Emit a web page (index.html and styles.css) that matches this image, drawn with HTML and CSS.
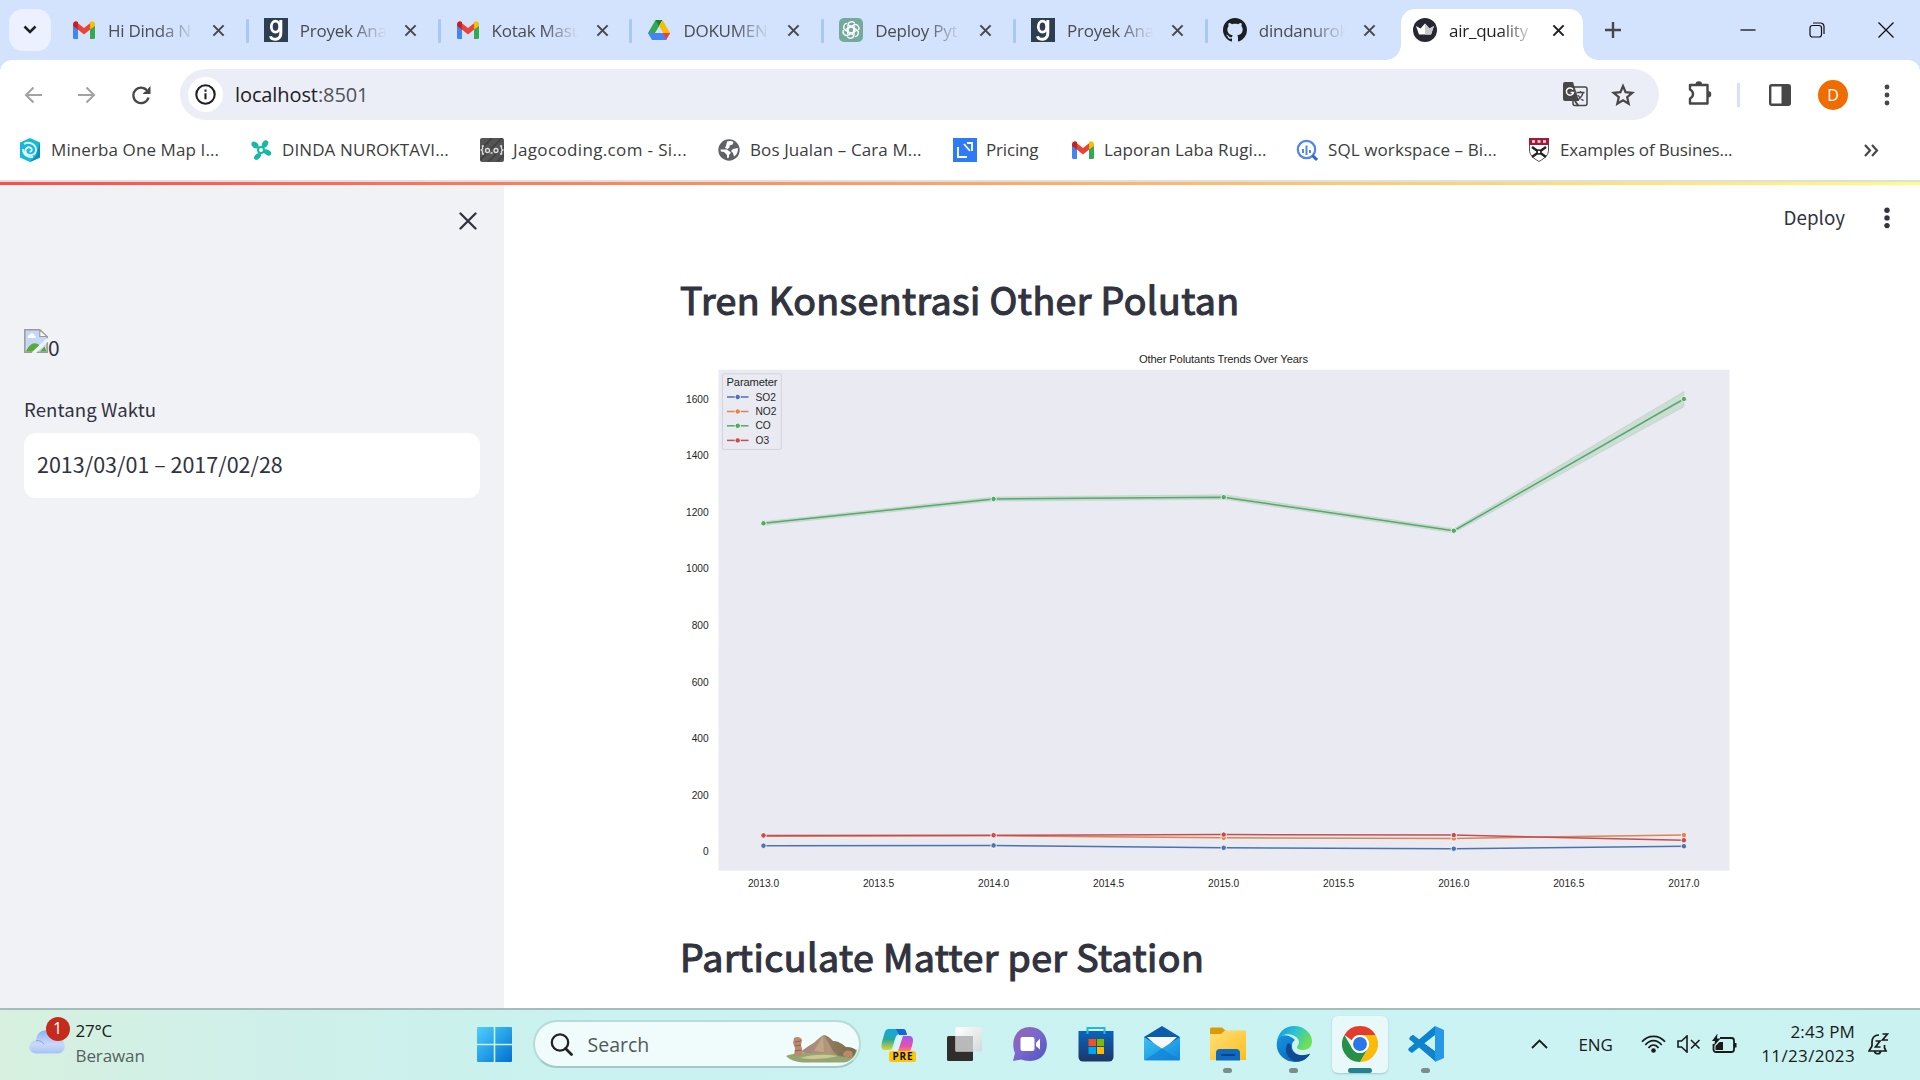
FILE: index.html
```html
<!DOCTYPE html>
<html lang="id">
<head>
<meta charset="utf-8">
<title>air_quality</title>
<link rel="stylesheet" href="styles.css">
</head>
<body>
<svg class="defs" width="0" height="0">
  <defs>
    <symbol id="gmail" viewBox="0 0 24 24">
      <path fill="#4285f4" d="M1 6v13.500a1.500 1.500 0 0 0 1.500 1.500H6V10z"/>
      <path fill="#34a853" d="M23 6v13.500a1.500 1.500 0 0 1-1.500 1.500H18V10z"/>
      <path fill="#ea4335" d="M5 4.500 12 10l7-5.500 1 5.500-8 6.500L4 10z"/>
      <path fill="#c5221f" d="M1 6.500C1 3.500 4 2.500 6 4v7.500L1 8z"/>
      <path fill="#fbbc04" d="M23 6.500C23 3.500 20 2.500 18 4v7.500L23 8z"/>
    </symbol>
    <symbol id="nine" viewBox="0 0 24 24">
      <path fill="#2d3e50" d="M0 0h24v24H0z"/>
      <ellipse cx="11.500" cy="8.700" rx="4.200" ry="5.500" fill="none" stroke="#fff" stroke-width="2.800"/>
      <path fill="none" stroke="#fff" stroke-width="3" d="M16.800 2v13c0 8-9.500 7.500-10.300 3.200"/>
    </symbol>
    <symbol id="cross" viewBox="0 0 14 14"><path d="m1.500 1.500 11 11m0-11-11 11" stroke="currentColor" stroke-width="2.200" fill="none"/></symbol>
    <linearGradient id="gWin" x1="0" y1="0" x2="1" y2="1"><stop offset="0" stop-color="#4dd0ff"/><stop offset="1" stop-color="#0070d0"/></linearGradient>
    <linearGradient id="gCloud" x1="0" y1="0" x2="0" y2="1"><stop offset="0" stop-color="#8fb0f2"/><stop offset=".6" stop-color="#c9daf8"/><stop offset="1" stop-color="#a9c2f5"/></linearGradient>
    <linearGradient id="gCopA" x1="0" y1="0" x2="0" y2="1"><stop offset="0" stop-color="#12a5ef"/><stop offset=".5" stop-color="#28a9a0"/><stop offset="1" stop-color="#e6d32a"/></linearGradient>
    <linearGradient id="gCopB" x1="0" y1="0" x2="0" y2="1"><stop offset="0" stop-color="#a355f2"/><stop offset=".6" stop-color="#e753a6"/><stop offset="1" stop-color="#ff9062"/></linearGradient>
    <linearGradient id="gChat" x1="0" y1="0" x2="1" y2="1"><stop offset="0" stop-color="#9a65a9"/><stop offset=".45" stop-color="#7b68cf"/><stop offset="1" stop-color="#4f55c0"/></linearGradient>
    <linearGradient id="gStore" x1="0" y1="0" x2="0" y2="1"><stop offset="0" stop-color="#0a64be"/><stop offset="1" stop-color="#1e3765"/></linearGradient>
    <linearGradient id="gMail" x1="0" y1="0" x2="1" y2="1"><stop offset="0" stop-color="#39c2f5"/><stop offset="1" stop-color="#1286db"/></linearGradient>
    <linearGradient id="gFolder" x1="0" y1="0" x2="1" y2="1"><stop offset="0" stop-color="#ffe07a"/><stop offset="1" stop-color="#ffbd1c"/></linearGradient>
    <linearGradient id="gEdge" x1="0" y1="0" x2="1" y2=".5"><stop offset="0" stop-color="#0f8fe0"/><stop offset=".5" stop-color="#2cc3d2"/><stop offset="1" stop-color="#6ee053"/></linearGradient>
    <linearGradient id="gEdge2" x1="0" y1="0" x2="1" y2="1"><stop offset="0" stop-color="#1496e5"/><stop offset="1" stop-color="#0b57ad"/></linearGradient>
    <linearGradient id="gHill" x1="0" y1="0" x2="1" y2="0"><stop offset="0" stop-color="#a5827d"/><stop offset=".5" stop-color="#b3977a"/><stop offset="1" stop-color="#6c7048"/></linearGradient>
    <linearGradient id="gPlate" x1="0" y1="0" x2="1" y2="1"><stop offset="0" stop-color="#fff"/><stop offset="1" stop-color="#d5d9da"/></linearGradient>
  </defs>
</svg>

<header class="tabstrip">
  <button class="tab-search"><svg width="14" height="10" viewBox="0 0 14 10"><path d="m1.500 1.500 5.500 5.500 5.500-5.500" fill="none" stroke="#202124" stroke-width="2.500"/></svg></button>
  <nav class="tabs">
    <div class="tab"><svg class="fav"><use href="#gmail"/></svg><span class="title">Hi Dinda N</span><svg class="close"><use href="#cross"/></svg></div>
    <div class="tab"><svg class="fav"><use href="#nine"/></svg><span class="title">Proyek Ana</span><svg class="close"><use href="#cross"/></svg></div>
    <div class="tab"><svg class="fav"><use href="#gmail"/></svg><span class="title">Kotak Masu</span><svg class="close"><use href="#cross"/></svg></div>
    <div class="tab"><svg class="fav" viewBox="0 0 24 24"><path fill="#34a853" d="M8.500 2h3.700L12 9 5 20 1 15z"/><path fill="#188038" d="M8.500 2h7L12 8z"/><path fill="#fbbc04" d="M15.500 2 23 15h-7L12 8z"/><path fill="#4285f4" d="M1 15h22l-4 7H5z"/><path fill="#ea4335" d="M16 15h7l-4 7z"/><path fill="#d3e2fd" d="m12 8.500 4 6.500H8z"/></svg><span class="title">DOKUMEN</span><svg class="close"><use href="#cross"/></svg></div>
    <div class="tab"><svg class="fav" viewBox="0 0 24 24"><rect width="24" height="24" rx="5" fill="#74aa9c"/><g fill="none" stroke="#fff" stroke-width="1.300"><path id="petal" d="M9 14V7.500c0-4 5-5 6.800-2M9 14l3 1.600 5.500-3.100"/><use href="#petal" transform="rotate(60 12 12)"/><use href="#petal" transform="rotate(120 12 12)"/><use href="#petal" transform="rotate(180 12 12)"/><use href="#petal" transform="rotate(240 12 12)"/><use href="#petal" transform="rotate(300 12 12)"/></g></svg><span class="title">Deploy Pyt</span><svg class="close"><use href="#cross"/></svg></div>
    <div class="tab"><svg class="fav"><use href="#nine"/></svg><span class="title">Proyek Ana</span><svg class="close"><use href="#cross"/></svg></div>
    <div class="tab last"><svg class="fav" viewBox="0 0 16 16"><path fill="#1b1f24" d="M8 0C3.580 0 0 3.580 0 8c0 3.540 2.290 6.530 5.470 7.590.4.070.55-.17.55-.38 0-.19-.01-.82-.01-1.490-2.010.37-2.530-.49-2.690-.94-.09-.23-.48-.94-.82-1.130-.28-.15-.68-.52-.01-.53.63-.01 1.080.58 1.230.82.72 1.210 1.870.87 2.330.66.07-.52.28-.87.51-1.070-1.780-.2-3.640-.89-3.640-3.950 0-.87.31-1.590.82-2.150-.08-.2-.36-1.020.08-2.120 0 0 .67-.21 2.200.82.64-.18 1.320-.27 2-.27s1.360.09 2 .27c1.530-1.040 2.200-.82 2.200-.82.44 1.100.16 1.920.08 2.120.51.56.82 1.270.82 2.150 0 3.070-1.870 3.750-3.650 3.950.29.25.54.73.54 1.480 0 1.070-.01 1.930-.01 2.200 0 .21.15.46.55.38A8.010 8.010 0 0 0 16 8c0-4.420-3.580-8-8-8"/></svg><span class="title">dindanurok</span><svg class="close"><use href="#cross"/></svg></div>
    <div class="tab active"><svg class="fav" viewBox="0 0 24 24"><circle cx="12" cy="12" r="12" fill="#262730"/><path fill="#fff" d="m3 8 4.500 2.500L12 5.500l4.500 5L21 8l-3 8.500H6z"/><path fill="#c9c9cc" d="M12 5.500V16.500h6L21 8l-4.500 2.500z"/></svg><span class="title">air_quality</span><svg class="close"><use href="#cross"/></svg></div>
  </nav>
  <svg class="newtab" width="16" height="16" viewBox="0 0 16 16"><path d="M8 0v16M0 8h16" stroke="#474747" stroke-width="2.400"/></svg>
  <div class="window-buttons">
    <svg width="16" height="16"><path d="M.5 8h15" stroke="#111" stroke-width="1.300"/></svg>
    <svg width="16" height="16" viewBox="0 0 16 16" fill="none" stroke="#111" stroke-width="1.200"><rect x="1" y="3.500" width="11.500" height="11.500" rx="2.500"/><path d="M4 1h7.500A3.500 3.500 0 0 1 15 4.500V12"/></svg>
    <svg width="16" height="16"><path d="m.5.5 15 15m0-15-15 15" stroke="#111" stroke-width="1.300"/></svg>
  </div>
</header>

<section class="toolbar">
  <div class="address-row">
    <svg class="nav back" width="18" height="18" viewBox="0 0 18 18"><path d="M18 9H2M9.500 1.500 2 9l7.500 7.500" fill="none" stroke="#a3a3a5" stroke-width="2.100"/></svg>
    <svg class="nav forward" width="18" height="18" viewBox="0 0 18 18"><path d="M0 9h16M8.500 1.500 16 9l-7.500 7.500" fill="none" stroke="#a3a3a5" stroke-width="2.100"/></svg>
    <svg class="nav reload" width="20" height="20" viewBox="0 0 20 20"><path d="M17 7A7.700 7.700 0 1 0 17.500 12.500" fill="none" stroke="#474747" stroke-width="2.300"/><path d="M19.500 1v8h-8l2.500-2.500h3V3.500z" fill="#474747"/></svg>
    <div class="omnibox">
      <span class="site-info"><svg width="21" height="21" viewBox="0 0 21 21"><circle cx="10.500" cy="10.500" r="9.200" fill="none" stroke="#202124" stroke-width="2.100"/><path d="M10.500 9.200v6M10.500 5.500v2.200" stroke="#202124" stroke-width="2.100"/></svg></span>
      <span class="url">localhost<i>:8501</i></span>
      <svg class="translate" width="25" height="25" viewBox="0 0 25 25"><rect x="10" y="5" width="14" height="18.500" rx="2" fill="#eceef7" stroke="#474747" stroke-width="1.500"/><path d="M2 0h8l6 19H2a2 2 0 0 1-2-2V2a2 2 0 0 1 2-2z" fill="#474747"/><path d="M10 7.500a3.600 3.600 0 1 0 .5 3H7.500" fill="none" stroke="#fff" stroke-width="1.500"/><path d="m12 19 3.500 5" stroke="#474747" stroke-width="2"/><path d="M13.500 10.500h8M17.500 9v2M20 11c-.8 3-3 5.500-5.200 7M14.800 13c1.500 2.500 3.500 4.500 5.700 5.600" fill="none" stroke="#474747" stroke-width="1.300"/></svg>
      <svg class="star" width="24" height="23" viewBox="0 0 24 23"><path d="m12 3 2.600 6.200 6.700.6-5.100 4.400 1.500 6.500-5.700-3.500-5.700 3.500 1.500-6.500-5.100-4.400 6.700-.6z" fill="none" stroke="#474747" stroke-width="2.200"/></svg>
    </div>
    <svg class="puzzle" width="26" height="26" viewBox="0 0 26 26"><path d="M3 5h17.500v18.500H3v-5c4-2 4-7 0-9z" fill="none" stroke="#474747" stroke-width="2.400" stroke-linejoin="round"/><path d="M8.500 4.500a3.300 3.300 0 0 1 6.600 0zM21 11a3.300 3.300 0 0 1 0 6.600z" fill="#474747"/></svg>
    <span class="divider"></span>
    <svg class="panel" width="22" height="22" viewBox="0 0 22 22"><rect x="1.200" y="1.200" width="19.600" height="19.600" rx="1.500" fill="none" stroke="#474747" stroke-width="2.400"/><path fill="#474747" d="M12.500 1H21v20h-8.500z"/></svg>
    <span class="avatar">D</span>
    <svg class="kebab" width="6" height="22" viewBox="0 0 6 22" fill="#474747"><circle cx="3" cy="3" r="2.400"/><circle cx="3" cy="11" r="2.400"/><circle cx="3" cy="19" r="2.400"/></svg>
  </div>
  <div class="bookmarks">
    <a class="wide"><svg class="fav" viewBox="0 0 24 24"><path fill="#18b8d8" d="m12 0 10 4.500v15L12 24 2 19.500v-15z"/><path fill="#0c8fb4" d="m12 24 10-4.500v-15L18 18z"/><path d="M6 6c5-3 12 0 12 6 0 5-7 7-10 3-2-4 2-7 5-5 2 2 0 4-1.500 3.500M5 11c0 6 5 9 10 8" fill="none" stroke="#e2fbff" stroke-width="1.800"/></svg><span>Minerba One Map I...</span></a>
    <a class="wide"><svg class="fav" viewBox="0 0 24 24"><g fill="#16b8a6"><ellipse cx="6" cy="7" rx="4" ry="2.800" transform="rotate(40 6 7)"/><ellipse cx="16" cy="6" rx="4" ry="2.800" transform="rotate(-60 16 6)"/><ellipse cx="18.500" cy="14.500" rx="4" ry="2.600" transform="rotate(30 18.500 14.500)"/><ellipse cx="8.500" cy="18.500" rx="4" ry="2.600" transform="rotate(-45 8.500 18.500)"/></g><circle cx="12" cy="12" r="3" fill="#fff" stroke="#16b8a6" stroke-width="2"/></svg><span>DINDA NUROKTAVI...</span></a>
    <a class="widest"><svg class="fav" viewBox="0 0 24 24"><rect width="24" height="24" rx="2" fill="#555"/><path d="M0 12 12 0M0 22 22 0M8 24 24 8M17 24l7-7" stroke="#444" stroke-width="2"/><path d="M4 8H2.500v3L1 12l1.500 1v3H4M20 8h1.500v3l1.500 1-1.500 1v3H20M10.500 15h2" fill="none" stroke="#ddd" stroke-width="1.300"/><circle cx="7.500" cy="12.500" r="2" fill="none" stroke="#ddd" stroke-width="1.300"/><circle cx="16" cy="12.500" r="2" fill="none" stroke="#ddd" stroke-width="1.300"/></svg><span>Jagocoding.com - Si...</span></a>
    <a class="wide"><svg class="fav" viewBox="0 0 24 24"><circle cx="12" cy="12" r="10.700" fill="#5f6368"/><path fill="#fff" d="M3.500 11.500h6.500l2.500 2c2 .5 1 3-.5 3v2.500c-.5 1.500-2 1.500-2 0V17l-3-3-3-.5zM10 3.500c2-1 5-.5 6.500.5l-1 2.500-3 1v2l-2 1.500-2.500-1 1-2zM16 11l4.800-1c.5 3-.8 7-3.800 8.500l-1-3.500-2-2z"/></svg><span>Bos Jualan – Cara M...</span></a>
    <a><svg class="fav" viewBox="0 0 24 24"><path fill="#2f7bf6" d="M0 0h24v24H0z"/><path d="M5 9v10h9M14 5h5v8M11 6l6 7" fill="none" stroke="#fff" stroke-width="1.800"/></svg><span>Pricing</span></a>
    <a class="wide"><svg class="fav"><use href="#gmail"/></svg><span>Laporan Laba Rugi...</span></a>
    <a class="wide"><svg class="fav" viewBox="0 0 24 24"><circle cx="11.500" cy="11.500" r="8.700" fill="none" stroke="#4f86ec" stroke-width="2.200"/><path d="m17.500 17.500 4.500 4.500" stroke="#2b66d9" stroke-width="3"/><path d="M8 11v4M11.500 7.500V17M15 12v3" stroke="#4f86ec" stroke-width="2"/></svg><span>SQL workspace – Bi...</span></a>
    <a><svg class="fav" viewBox="0 0 24 24"><path fill="#fff" stroke="#555" d="M2.500.5h19V12c0 5-3.500 8-9.500 11.500C6 20 2.500 17 2.500 12z"/><path fill="#9e1b39" d="M2 0h20v7H2z"/><path d="M5 3.500h3M10.500 3.500h3M16 3.500h3" stroke="#f3dce1" stroke-width="2.500"/><path d="m5 9 14 10M19 9 5 19" stroke="#222" stroke-width="2.400"/><circle cx="12" cy="14" r="2" fill="#fff" stroke="#222" stroke-width="1.500"/></svg><span>Examples of Busines...</span></a>
    <svg class="more" width="15" height="13" viewBox="0 0 15 13"><path d="m1 1 5 5.500L1 12M8 1l5 5.500L8 12" fill="none" stroke="#474747" stroke-width="2.200"/></svg>
  </div>
</section>

<div class="decoration"></div>

<div class="app">
  <aside class="sidebar">
    <div class="sidebar-head"><svg width="18" height="18" viewBox="0 0 18 18"><path d="m1.500 1.500 15 15m0-15-15 15" stroke="#31333f" stroke-width="2.300" stroke-linecap="round"/></svg></div>
    <div class="broken">
      <svg width="24" height="24" viewBox="0 0 24 24"><path fill="#c5d7f6" stroke="#9b9b9b" stroke-width="1.500" d="M.8.8h15L23.200 8v15.200H.8z"/><path fill="#fff" stroke="#9b9b9b" stroke-width="1.200" d="M15.800 1v6.500h7.400z"/><path fill="#fff" d="M4 9a2 2 0 0 1 1.500-3c1-2.500 4.500-2 4.700.5C12 6.500 12 9 11 9z"/><path fill="#56ab35" d="M2 22.500c3-7.500 9-11 13.500-6L10 22.500zM16 22.500l4.500-5 2 5z"/><path d="M9 24.500 24.500 10" stroke="#f0f2f6" stroke-width="3.500"/></svg><span>0</span>
    </div>
    <label class="field-label">Rentang Waktu</label>
    <div class="date-input">2013/03/01 – 2017/02/28</div>
  </aside>
  <main class="main">
    <div class="app-bar"><span>Deploy</span><svg width="6" height="22" viewBox="0 0 6 22" fill="#31333f"><circle cx="3" cy="3.200" r="2.700"/><circle cx="3" cy="10.900" r="2.700"/><circle cx="3" cy="18.600" r="2.700"/></svg></div>
    <h2 class="first-heading">Tren Konsentrasi Other Polutan</h2>
    <svg class="chart" width="1060" height="560" viewBox="680 340 1060 560">
      <rect x="718.500" y="369.700" width="1011" height="501" fill="#eaeaf2"/>
      <text class="chart-title" x="1223.500" y="363.400" textLength="169" text-anchor="middle">Other Polutants Trends Over Years</text>
      <g class="ylabels" text-anchor="end">
        <text x="708.700" y="402.600">1600</text><text x="708.700" y="459.200">1400</text><text x="708.700" y="515.700">1200</text><text x="708.700" y="572.300">1000</text><text x="708.700" y="628.900">800</text><text x="708.700" y="685.500">600</text><text x="708.700" y="742">400</text><text x="708.700" y="798.600">200</text><text x="708.700" y="855.200">0</text>
      </g>
      <g class="xlabels" text-anchor="middle">
        <text x="763.500" y="887.300">2013.0</text><text x="878.500" y="887.300">2013.5</text><text x="993.600" y="887.300">2014.0</text><text x="1108.600" y="887.300">2014.5</text><text x="1223.700" y="887.300">2015.0</text><text x="1338.700" y="887.300">2015.5</text><text x="1453.800" y="887.300">2016.0</text><text x="1568.800" y="887.300">2016.5</text><text x="1683.900" y="887.300">2017.0</text>
      </g>
      <path fill="#55a868" fill-opacity=".2" stroke="#55a868" stroke-opacity=".15" d="M763.500 521.500 993.600 497l230.100-2.300 230.100 34 230.100-137.200v15.300l-230.100 126-230.100-33.500-230.100 1.800-230.100 24.200z"/>
      <g class="series blue"><polyline points="763.500,845.700 993.600,845.400 1223.700,847.800 1453.800,848.700 1683.900,846.200"/><circle cx="763.500" cy="845.700" r="2.700"/><circle cx="993.600" cy="845.400" r="2.700"/><circle cx="1223.700" cy="847.800" r="2.700"/><circle cx="1453.800" cy="848.700" r="2.700"/><circle cx="1683.900" cy="846.200" r="2.700"/></g>
      <g class="series orange"><polyline points="763.500,836.300 993.600,835.800 1223.700,837.800 1453.800,838.400 1683.900,835"/><circle cx="763.500" cy="836.300" r="2.700"/><circle cx="993.600" cy="835.800" r="2.700"/><circle cx="1223.700" cy="837.800" r="2.700"/><circle cx="1453.800" cy="838.400" r="2.700"/><circle cx="1683.900" cy="835" r="2.700"/></g>
      <g class="series green"><polyline points="763.500,523.300 993.600,499 1223.700,497.200 1453.800,530.700 1683.900,399"/><circle cx="763.500" cy="523.300" r="2.700"/><circle cx="993.600" cy="499" r="2.700"/><circle cx="1223.700" cy="497.200" r="2.700"/><circle cx="1453.800" cy="530.700" r="2.700"/><circle cx="1683.900" cy="399" r="2.700"/></g>
      <g class="series red"><polyline points="763.500,835.400 993.600,835.200 1223.700,834.600 1453.800,835.100 1683.900,840.200"/><circle cx="763.500" cy="835.400" r="2.700"/><circle cx="993.600" cy="835.200" r="2.700"/><circle cx="1223.700" cy="834.600" r="2.700"/><circle cx="1453.800" cy="835.100" r="2.700"/><circle cx="1683.900" cy="840.200" r="2.700"/></g>
      <rect x="722.500" y="373.800" width="58.800" height="75.600" rx="1.500" fill="#eaeaf2" stroke="#d3d3dc"/>
      <text class="legend-title" x="726.500" y="385.600" textLength="51">Parameter</text>
      <g class="series blue"><path d="M727 397h21.500"/><circle cx="737.700" cy="397" r="2.700"/></g>
      <g class="series orange"><path d="M727 411.500h21.500"/><circle cx="737.700" cy="411.500" r="2.700"/></g>
      <g class="series green"><path d="M727 425.800h21.500"/><circle cx="737.700" cy="425.800" r="2.700"/></g>
      <g class="series red"><path d="M727 440.400h21.500"/><circle cx="737.700" cy="440.400" r="2.700"/></g>
      <g class="legend"><text x="755.500" y="400.600">SO2</text><text x="755.500" y="415.100">NO2</text><text x="755.500" y="429.400">CO</text><text x="755.500" y="443.900">O3</text></g>
    </svg>
    <h2 class="second-heading">Particulate Matter per Station</h2>
  </main>
</div>

<footer class="taskbar">
  <div class="weather">
    <span class="weather-icon"><svg width="36" height="24" viewBox="0 0 36 24"><path fill="url(#gCloud)" d="M7 23.500C-2 23-1.500 10.500 7 10.500 8-2.500 23-3 25.500 8 38 7 39 22.500 29 23.500z"/><path fill="none" stroke="#86a5ee" d="M7 10.500c4-.5 7 1.500 8 4"/></svg><b>1</b></span>
    <div class="weather-text"><p>27°C</p><p class="muted">Berawan</p></div>
  </div>
  <svg class="start" width="35" height="35" viewBox="0 0 35 35" fill="url(#gWin)"><path d="M1 0h15.700v16.700H0V1a1 1 0 0 1 1-1zM18.300 0H34a1 1 0 0 1 1 1v15.700H18.300zM0 18.300h16.700V35H1a1 1 0 0 1-1-1zM18.300 18.300H35V34a1 1 0 0 1-1 1H18.300z"/></svg>
  <div class="search">
    <svg width="23" height="23" viewBox="0 0 23 23"><circle cx="10" cy="9.500" r="8.200" fill="none" stroke="#222" stroke-width="2.300"/><path d="m15.500 15.500 6 6" stroke="#222" stroke-width="2.800" stroke-linecap="round"/></svg>
    <span>Search</span>
    <svg class="landscape" width="71" height="29" viewBox="0 0 71 29"><path fill="#94a672" d="M0 22c4-2 12-3 20-3h48l3-4c0 4-3 9-8 12-2 1-5 1.500-9 1.500H18C8 28 3 25 0 22z"/><path fill="#ccc890" d="M14 24c12-4 26-4 38-2-12 3-26 4-38 2z"/><path fill="url(#gHill)" d="M15 18c3-3 7-6 11-8 5-3 8-8 12-9 4 1 6 3 9 6 5 0 9 3 13 6 4 0 8 1 10 3-1 5-3 7-6 8-10-3-21-5-32-5-8 0-11 1-17-1z"/><path fill="#7d694f" fill-opacity=".6" d="m38 1 8 14c1 3 4 4 6 7 4 1 9 1 14 1l4-7c-3-2-7-3-10-3-4-3-8-6-13-6-3-3-5-5-9-6z"/><path fill="#d3b591" fill-opacity=".55" d="m37 2-9 15 10 1z"/><path fill="#b98c6f" d="M8 4c3-2 7-1 8 2l-1 5 2 7-2 4H8l1-8-2-5z"/><path d="m9 8 6-1M9 12l6-1M9 17l6-1" stroke="#8c6148"/><path fill="#bc8a62" d="M57 21c1-5 5-5 8-4 2 1 2 3 1 6-3 1-7 1-9-2z"/></svg>
  </div>
  <div class="pinned">
    <span class="app-icon"><svg width="36" height="36" viewBox="0 0 36 36"><path fill="url(#gCopA)" d="M9 3h14c3 0 3 3 4 5h-8c-5 0-5 16-9 16H5c-6 0-3-8-1-15 1-4 2-6 5-6z"/><path fill="#1565d8" d="M16 3h7c3 0 3 3 4 6h-8z"/><path fill="url(#gCopB)" d="M22 10h7c6 0 4 7 2 13-1 3-2 4-5 4H13c5-2 5-17 9-17z"/><path fill="#d8f6f5" d="m18 10h5l-5 15h-5z"/><rect x="9" y="25" width="27" height="11" rx="2.500" fill="#fcc40a"/><text class="pre" x="12.500" y="34" textLength="20">PRE</text></svg></span>
    <span class="app-icon"><svg width="36" height="36" viewBox="0 0 36 36"><rect x="1" y="10" width="26" height="25" rx="1.500" fill="#2f2e2d"/><rect x="9.500" y="1" width="26.500" height="24.500" rx="1" fill="url(#gPlate)"/><path fill="#b9b9b9" d="M9.500 10H27v15.500H9.500z"/></svg></span>
    <span class="app-icon"><svg width="36" height="36" viewBox="0 0 36 36"><path fill="url(#gChat)" d="M18 1c22 0 23 34 0 34-4 0-7-1-9-1.500L1 35l2-8C-2 15 4 1 18 1z"/><rect x="8.500" y="11" width="14" height="14" rx="2" fill="#fff"/><path fill="#fff" d="m24 17 4-4.500v11L24 20z"/></svg></span>
    <span class="app-icon"><svg width="36" height="36" viewBox="0 0 36 36"><path fill="url(#gStore)" d="M.5 5h35v26a4.500 4.500 0 0 1-4.500 4.500H5A4.500 4.500 0 0 1 .5 31z"/><path fill="none" stroke="#21b5f3" stroke-width="2" d="M9.500 8V2h17v6"/><path fill="#f25022" d="M10.500 13H18v7h-7.500z"/><path fill="#7fba00" d="M19 13h7v7h-7z"/><path fill="#00a4ef" d="M10.500 21H18v7h-7.500z"/><path fill="#ffb900" d="M19 21h7v7h-7z"/></svg></span>
    <span class="app-icon"><svg width="36" height="36" viewBox="0 0 36 36"><path fill="#0b5cad" d="M0 11 18 0l18 11v11H0z"/><path fill="#f7f7f7" d="M3 11h30L18 25z"/><path fill="url(#gMail)" d="m0 11 18 11.500L36 11v22.500a1 1 0 0 1-1 1H1a1 1 0 0 1-1-1z"/><path fill="#1282d6" fill-opacity=".7" d="M18 22.500 36 34H1z"/></svg></span>
    <span class="app-icon running"><svg width="36" height="36" viewBox="0 0 36 36"><path fill="#dc9a09" d="M0 3a1.500 1.500 0 0 1 1.500-1.500H12L16 5l-4 5H0z"/><path fill="url(#gFolder)" d="M0 8h11l4-3.500h19.500A1.500 1.500 0 0 1 36 6v28H0z"/><path fill="#0b6bc0" d="M6 34.500V27a4 4 0 0 1 4-4h16a4 4 0 0 1 4 4v7.500z"/><path d="M11 29h14" stroke="#083f7c" stroke-width="1.800"/></svg></span>
    <span class="app-icon running"><svg width="36" height="36" viewBox="0 0 36 36"><path fill="url(#gEdge2)" d="M2 12C-3 25 7 36 19 36c7 0 12-3 15-8-8 4-19 0-18-9 0-3 3-5 3-5C14 8 4 8 2 12z"/><path fill="url(#gEdge)" d="M1 15C3 5 10 0 18 0c11 0 18 8 18 15 0 6-4 9-9 9-4 0-6-1-6-3 0-1 2-2 2-5 0-7-15-13-22-1z"/><path fill="#104a93" d="M12 17c-5 8 0 18 10 18.500 6-1 10-4 12-8-9 4-20 1-19-9z"/></svg></span>
    <span class="app-icon current"><svg width="36" height="36" viewBox="0 0 48 48"><path fill="#e33b2e" d="M24 0a24 24 0 0 1 20.800 12H24a12 12 0 0 0-11 7L3.200 12A24 24 0 0 1 24 0z"/><path fill="#fbbc09" d="M44.800 12A24 24 0 0 1 24 48l10.500-18A12 12 0 0 0 24 12z"/><path fill="#289046" d="M3.200 12 13.600 30A12 12 0 0 0 34.400 30L24 48A24 24 0 0 1 3.200 12z"/><circle cx="24" cy="24" r="12" fill="#fff"/><circle cx="24" cy="24" r="9.300" fill="#2878e9"/></svg></span>
    <span class="app-icon running"><svg width="36" height="36" viewBox="0 0 36 36"><path fill="#0b70b6" d="m2 11 3-2 23 17-1 9z"/><path fill="#0884d0" d="M1 25c-1-1-1-2 0-3L27 0v9L4 27z"/><path fill="#0f83cd" d="m2 11 3-2 22 17v9L1 13z"/><path fill="#2698e8" d="m27 0 9 4v28l-9 4z"/></svg></span>
  </div>
  <div class="tray">
    <svg class="chev" width="17" height="10" viewBox="0 0 17 10"><path d="m1 9 7.500-7.500L16 9" fill="none" stroke="#1a1a1a" stroke-width="1.800"/></svg>
    <span class="lang">ENG</span>
    <svg width="25" height="18" viewBox="0 0 25 18"><path d="M1 6.800C7-.5 18-.5 24 6.800M4.300 10C9 4.200 16 4.200 20.700 10M7.500 13c2.700-4 7.300-4 10 0" fill="none" stroke="#1a1a1a" stroke-width="1.700"/><circle cx="12.500" cy="15.500" r="2.300" fill="#1a1a1a"/></svg>
    <svg width="24" height="18" viewBox="0 0 24 18"><path d="M1 6h3.500L10 1v16l-5.500-5H1zM14 5l8.500 8.500m0-8.500L14 13.500" fill="none" stroke="#1a1a1a" stroke-width="1.600"/></svg>
    <svg class="battery" width="25" height="21" viewBox="0 0 25 21"><path d="M8 4h11.500A2.500 2.500 0 0 1 22 6.500v9a2.500 2.500 0 0 1-2.500 2.500H4a2.500 2.500 0 0 1-2.500-2.500V10" fill="none" stroke="#1a1a1a" stroke-width="1.800"/><path fill="#1a1a1a" d="M3.500 16v-4L7.500 8H11v8zM22 9h2.500v4.500H22zM5.500-.5 0 7h3L2 12l6.500-7.500H5z"/></svg>
    <div class="clock"><p>2:43 PM</p><p class="date">11/23/2023</p></div>
    <svg class="bell" width="21" height="22" viewBox="0 0 21 22"><path d="M11 2C6 2 4 5 4 9v4l-3 5h17l-1.500-3v-3M6.500 18.500c1 3 5.500 3 6 0M7.500 8h4.500l-4.500 6h5M14.500 1h5l-5 6H20" fill="none" stroke="#1a1a1a" stroke-width="1.700"/></svg>
  </div>
</footer>
</body>
</html>
```
FILE: styles.css
```css
* { box-sizing: border-box; }
body {
  margin: 0; width: 1920px; height: 1080px; overflow: hidden;
  display: flex; flex-direction: column; background: #fff;
  font-family: "Open Sans", "Noto Sans", sans-serif; color: #3c3d40;
}
svg { display: block; flex: none; }
p { margin: 0; }
.defs { position: absolute; }
.fav { width: 24px; height: 24px; }

/* Tab strip */
.tabstrip { height: 60px; flex: none; display: flex; align-items: center; background: #d3e2fd; position: relative; }
.tab-search {
  width: 42px; height: 42px; margin: 0 6px 0 9px; padding: 0; border: 0; border-radius: 14px;
  background: #ebf1fe; display: grid; place-items: center;
}
.tabs { display: flex; height: 60px; }
.tab {
  width: 191.800px; display: flex; align-items: center; padding-left: 15px; position: relative;
  font-size: 17px; color: #4a4c50;
}
.tab::after { content: ""; position: absolute; right: 0; top: 19px; width: 3px; height: 24px; border-radius: 1px; background: #a8c7fa; }
.tab.last::after, .tab.active::after { display: none; }
.tab .title {
  width: 88px; margin: 1px 0 0 12px; white-space: nowrap; padding-bottom: 1px;
  letter-spacing: -.25px;
  -webkit-mask-image: linear-gradient(90deg, #000 58%, transparent 98%);
  mask-image: linear-gradient(90deg, #000 58%, transparent 98%);
}
.close { width: 13px; height: 13px; margin-left: 16px; color: #474747; }
.active {
  width: 182px; height: 51px; margin: 9px 0 0 1.500px; padding: 0 0 9px 12px;
  background: #fff; border-radius: 14px 14px 0 0; color: #202124;
}
.active .close { color: #1f1f1f; margin-left: 15px; }
.active::before {
  content: ""; position: absolute; left: -15px; right: -15px; bottom: 0; height: 15px;
  background:
    radial-gradient(circle at 0 0, transparent 14.500px, #fff 15px) left / 15px 15px no-repeat,
    radial-gradient(circle at 100% 0, transparent 14.500px, #fff 15px) right / 15px 15px no-repeat;
}
.newtab { margin-left: 22px; }
.window-buttons { display: flex; gap: 53px; margin-left: auto; padding-right: 26.500px; }

/* Toolbar */
body::before { content: ""; position: absolute; top: 60px; width: 1920px; height: 14px; background: #d3e2fd; }
.toolbar { height: 120px; flex: none; background: #fff; border-radius: 12px 12px 0 0; position: relative; }
.address-row { height: 69px; display: flex; align-items: center; padding-left: 24px; }
.forward { margin-left: 36px; }
.reload { margin-left: 35px; }
.omnibox {
  width: 1479px; height: 51px; margin-left: 29px; padding: 0 24px 0 8px; border-radius: 26px;
  display: flex; align-items: center; background: #eceef7;
}
.site-info { width: 35px; height: 35px; border-radius: 50%; background: #fff; display: grid; place-items: center; }
.url { margin: -1px 0 0 12px; font-size: 20px; letter-spacing: -.1px; color: #202124; }
.url i { font-style: normal; color: #4f5257; }
.translate { margin-left: auto; }
.star { margin-left: 23px; }
.puzzle { margin: -3px 0 0 28px; }
.divider { width: 3px; height: 24px; margin-left: 24px; background: #d3e2fd; }
.panel { margin-left: 29px; }
.avatar {
  width: 30px; height: 30px; margin-left: 27px; border-radius: 50%; background: #ef6c00; color: #fff;
  font-size: 16px; display: grid; place-items: center;
}
.kebab { margin-left: 36px; }
.bookmarks {
  height: 42px; display: grid; align-items: center; padding: 0 41px 0 18px;
  grid-template-columns: 231px 231px 237px 236px 118px 224px 232px 1fr auto;
}
.bookmarks a { display: flex; align-items: center; gap: 9px; white-space: nowrap; font-size: 17px; letter-spacing: -.16px; }
.bookmarks a span { margin-top: -2px; }
.bookmarks .wide { letter-spacing: .1px; }
.bookmarks .widest { letter-spacing: .36px; }

.decoration { height: 5px; flex: none; border-top: 2px solid #dedfe0; background: linear-gradient(90deg, #ff4b4b, #fffd80) padding-box; }

/* Application */
.app { flex: 1; display: flex; min-height: 0; font-family: "Noto Sans CJK SC", sans-serif; color: #31333f; }
.sidebar { width: 504px; flex: none; background: #f0f2f6; padding: 0 24px; }
.sidebar-head { height: 144px; display: flex; justify-content: flex-end; padding: 27px 3px 0 0; }
.broken { height: 56px; display: flex; font-size: 21px; line-height: 24px; }
.broken span { padding-top: 6px; }
.field-label { display: block; height: 48px; padding-top: 11px; font-size: 18.600px; line-height: 26px; letter-spacing: .1px; }
.date-input {
  height: 65px; border-radius: 12px; background: #fff; padding: 0 13px;
  font-size: 21.500px; line-height: 62px;
}
.main { flex: 1; padding-left: 176px; overflow: hidden; }
.app-bar { height: 66px; display: flex; justify-content: flex-end; align-items: center; gap: 39px; padding-right: 30px; font-size: 18.800px; }
.app-bar span { margin-top: -3px; }
h2 { margin: 0; font-size: 37.500px; font-weight: 400; letter-spacing: .42px; -webkit-text-stroke: 1.200px #31333f; line-height: 50px; white-space: nowrap; }
.first-heading { padding-top: 23px; height: 89px; }
.second-heading { padding-top: 31px; }
.chart { font-family: "Liberation Sans", Arial, sans-serif; font-size: 10.200px; fill: #262626; }
.chart-title, .legend-title { font-size: 11.200px; }
.series { fill: none; stroke-width: 1.500; }
.series circle { stroke: #fff; stroke-width: .8; }
.blue { stroke: #4c72b0; } .blue circle { fill: #4c72b0; }
.orange { stroke: #dd8452; } .orange circle { fill: #dd8452; }
.green { stroke: #55a868; } .green circle { fill: #55a868; }
.red { stroke: #c44e52; } .red circle { fill: #c44e52; }

/* Taskbar */
.taskbar {
  height: 72px; flex: none; display: flex; align-items: center; border-top: 2px solid #a4bdbb; padding-bottom: 2px;
  background: linear-gradient(90deg, #d7f0df 0, #d0f0e9 230px, #c9f2f0 600px, #ccf3f3 1500px, #c9f2f0);
}
.weather { width: 476.500px; display: flex; padding-left: 28.500px; gap: 11px; }
.weather-icon { position: relative; width: 36px; padding-top: 21px; }
.weather-icon b {
  position: absolute; left: 17px; top: 8px; width: 24px; height: 24px; border-radius: 50%;
  background: #c42b1c; color: #fff; font-weight: 400; font-size: 16px; line-height: 23px; text-align: center;
}
.weather-text, .clock { font-size: 17px; line-height: 24.500px; color: #1a1a1a; letter-spacing: -.2px; }
.weather-text { padding-top: 10px; height: 70px; }
.weather-text .muted { color: #54625f; letter-spacing: -.1px; }
.clock { margin-left: auto; text-align: right; height: 49px; }
.clock p { letter-spacing: .15px; }
.clock .date { letter-spacing: .35px; }
.search {
  width: 328px; height: 48px; margin-left: 21px; padding: 0 2px 0 15px; border: 2px solid #b5dbda; border-bottom-color: #a3c9c7;
  border-radius: 24px; background: #f0fcfc; display: flex; align-items: center;
}
.search span { margin-left: 15px; font-size: 19.500px; color: #505a5a; }
.landscape { margin-left: auto; margin-top: 9px; }
.pinned { display: flex; margin-left: 4px; }
.app-icon { width: 66px; height: 70px; display: grid; place-items: center; position: relative; padding-bottom: 1px; }
.app-icon svg { position: relative; }
.running::after, .current::after {
  content: ""; position: absolute; bottom: 6px; left: 28.500px; width: 9px; height: 5px; border-radius: 3px; background: #788d8c;
}
.current::after { left: 21px; width: 24px; background: #248291; }
.current::before { content: ""; position: absolute; left: 5px; top: 7px; width: 56px; height: 57px; border-radius: 6px; background: #e9f8f9; box-shadow: 0 1px 2px #9fc8c8; }
.pre { font: 700 10px "Open Sans", sans-serif; fill: #111; }
.tray { flex: 1; display: flex; align-items: center; padding-left: 72px; }
.lang { margin: 0 27px 0 31px; width: 35px; font-size: 17px; color: #1a1a1a; letter-spacing: -.1px; }
.tray > svg + svg { margin-left: 11px; }
.bell { margin: -1px 31px 0 13px; }
```
